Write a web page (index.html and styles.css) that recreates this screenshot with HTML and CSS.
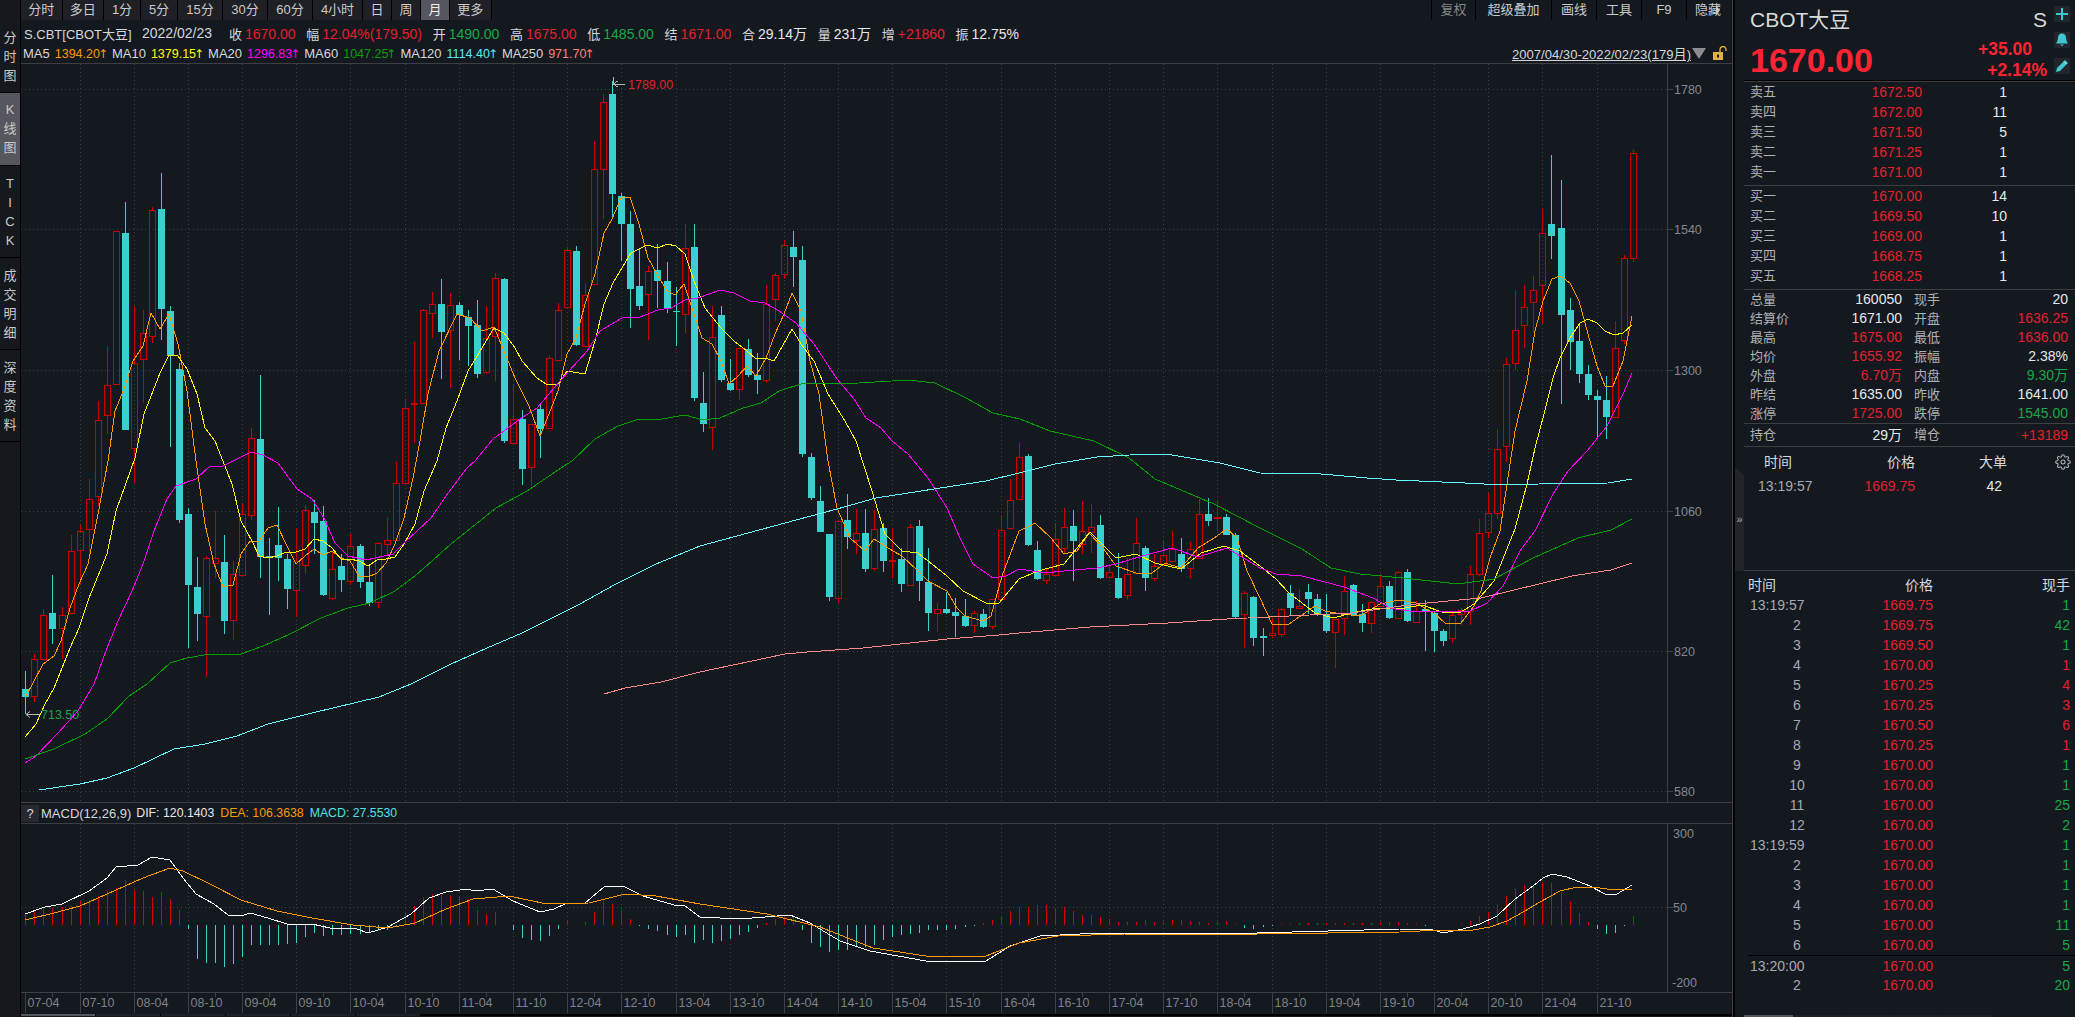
FILE: index.html
```html
<!DOCTYPE html>
<html lang="zh">
<head>
<meta charset="utf-8">
<title>CBOT大豆</title>
<link rel="stylesheet" href="styles.css">
</head>
<body>
<div class="app">
  <nav class="vtabs">
    <div class="vtab vt1">分<br>时<br>图</div>
    <div class="vtab vt2 on">K<br>线<br>图</div>
    <div class="vtab vt3">T<br>I<br>C<br>K</div>
    <div class="vtab vt3">成<br>交<br>明<br>细</div>
    <div class="vtab vt3">深<br>度<br>资<br>料</div>
  </nav>
  <main class="main">
    <div class="toolbar">
      <div class="periods">
        <span class="p w41">分时</span><span class="p w41">多日</span><span class="p w37">1分</span><span class="p w37">5分</span><span class="p w45">15分</span><span class="p w45">30分</span><span class="p w45">60分</span><span class="p w50">4小时</span><span class="p w29">日</span><span class="p w29">周</span><span class="p w28 on">月</span><span class="p w41">更多</span>
      </div>
      <div class="tools">
        <span class="p w44 dim">复权</span><span class="p w76">超级叠加</span><span class="p w45">画线</span><span class="p w45">工具</span><span class="p w45">F9</span><span class="p w46 hide">隐藏<i class="tri"></i></span>
      </div>
    </div>
    <div class="info">
      <span class="name">S.CBT[CBOT大豆]</span><span class="date">2022/02/23</span>
      <span class="kv">收<b class="r">1670.00</b></span>
      <span class="kv">幅<b class="r">12.04%(179.50)</b></span>
      <span class="kv">开<b class="g">1490.00</b></span>
      <span class="kv">高<b class="r">1675.00</b></span>
      <span class="kv">低<b class="g">1485.00</b></span>
      <span class="kv">结<b class="r">1671.00</b></span>
      <span class="kv">合<b class="w">29.14万</b></span>
      <span class="kv">量<b class="w">231万</b></span>
      <span class="kv">增<b class="r">+21860</b></span>
      <span class="kv">振<b class="w">12.75%</b></span>
    </div>
    <div class="mas">
      <div class="malist">
        <span class="ma">MA5<b class="c5">1394.20<i>↑</i></b></span>
        <span class="ma">MA10<b class="c10">1379.15<i>↑</i></b></span>
        <span class="ma">MA20<b class="c20">1296.83<i>↑</i></b></span>
        <span class="ma">MA60<b class="c60">1047.25<i>↑</i></b></span>
        <span class="ma">MA120<b class="c120">1114.40<i>↑</i></b></span>
        <span class="ma">MA250<b class="c250">971.70<i>↑</i></b></span>
      </div>
      <div class="range">
        <span class="rtext">2007/04/30-2022/02/23(179月)</span>
        <i class="rtri"></i>
        <svg class="lock" viewBox="0 0 16 14" width="16" height="14"><path d="M8 7V3.5a3 3 0 0 1 6 0V5" fill="none" stroke="#e2b33c" stroke-width="1.3"/><rect x="1" y="6" width="10" height="8" fill="#e2b33c"/><rect x="5" y="8.5" width="2" height="3" fill="#14181f"/></svg>
      </div>
    </div>
    <svg id="kline" class="kline" viewBox="21 63 1711 738" width="1711" height="738"></svg>
    <div class="macdhead">
      <span class="q">?</span><span class="mname">MACD(12,26,9)</span><span class="mv w">DIF: 120.1403</span><span class="mv c5">DEA: 106.3638</span><span class="mv cm">MACD: 27.5530</span>
    </div>
    <svg id="macd" class="macd" viewBox="21 823 1711 190" width="1711" height="190"></svg>
    <div class="btabs"><span class="bt on"></span><span class="bt"></span><span class="bt"></span><span class="bt"></span><span class="bt"></span><span class="bt"></span></div>
  </main>
  <aside class="side">
    <div class="inner">
      <header class="head">
        <div class="headmain">
          <div class="title"><span>CBOT大豆</span><span class="sym">S</span></div>
          <div class="priceline">
            <span class="bigprice">1670.00</span>
            <div class="chg"><span class="chg1">+35.00</span><span>+2.14%</span></div>
          </div>
        </div>
        <div class="tcol">
          <span class="tbtn"><svg viewBox="0 0 14 14" width="14" height="14"><path d="M7 1v12M1 7h12" stroke="#3fc6cf" stroke-width="2"/></svg></span>
          <span class="tbtn"><svg viewBox="0 0 14 14" width="14" height="14"><path d="M7 0.5c-2.6 0-4 2-4 4.5 0 3-1.6 4.6-2 5.5h12c-.4-.9-2-2.5-2-5.5 0-2.5-1.4-4.500-4-4.500zM5.300 11.500a1.800 1.800 0 0 0 3.400 0z" fill="#3fc6cf"/></svg></span>
          <span class="tbtn"><svg viewBox="0 0 14 14" width="14" height="14"><path d="M10 1l3 3-8 8-4 1 1-4z" fill="#3fc6cf"/><path d="M9 2.500l2.500 2.500" stroke="#b8f0f0" stroke-width="1"/></svg></span>
        </div>
      </header>
      <section class="book">
        <div class="brow"><span class="lb">卖五</span><span class="r">1672.50</span><span class="w">1</span></div>
        <div class="brow"><span class="lb">卖四</span><span class="r">1672.00</span><span class="w">11</span></div>
        <div class="brow"><span class="lb">卖三</span><span class="r">1671.50</span><span class="w">5</span></div>
        <div class="brow"><span class="lb">卖二</span><span class="r">1671.25</span><span class="w">1</span></div>
        <div class="brow"><span class="lb">卖一</span><span class="r">1671.00</span><span class="w">1</span></div>
      </section>
      <section class="book buy">
        <div class="brow"><span class="lb">买一</span><span class="r">1670.00</span><span class="w">14</span></div>
        <div class="brow"><span class="lb">买二</span><span class="r">1669.50</span><span class="w">10</span></div>
        <div class="brow"><span class="lb">买三</span><span class="r">1669.00</span><span class="w">1</span></div>
        <div class="brow"><span class="lb">买四</span><span class="r">1668.75</span><span class="w">1</span></div>
        <div class="brow"><span class="lb">买五</span><span class="r">1668.25</span><span class="w">1</span></div>
      </section>
      <section class="stats">
        <span class="lb">总量</span><span class="w">160050</span><span class="lb l2">现手</span><span class="w">20</span>
        <span class="lb">结算价</span><span class="w">1671.00</span><span class="lb l2">开盘</span><span class="r">1636.25</span>
        <span class="lb">最高</span><span class="r">1675.00</span><span class="lb l2">最低</span><span class="r">1636.00</span>
        <span class="lb">均价</span><span class="r">1655.92</span><span class="lb l2">振幅</span><span class="w">2.38%</span>
        <span class="lb">外盘</span><span class="r">6.70万</span><span class="lb l2">内盘</span><span class="g">9.30万</span>
        <span class="lb">昨结</span><span class="w">1635.00</span><span class="lb l2">昨收</span><span class="w">1641.00</span>
        <span class="lb">涨停</span><span class="r">1725.00</span><span class="lb l2">跌停</span><span class="g">1545.00</span>
      </section>
      <section class="stats hold">
        <span class="lb">持仓</span><span class="w">29万</span><span class="lb l2">增仓</span><span class="r">+13189</span>
      </section>
      <section class="big">
        <div class="bigh"><span class="bh1">时间</span><span>价格</span><span>大单</span>
          <svg class="gear" viewBox="0 0 24 24" width="16" height="16"><circle cx="12" cy="12" r="3"/><path d="M19.4 15a1.65 1.65 0 0 0 .33 1.82l.06.06a2 2 0 0 1 0 2.83 2 2 0 0 1-2.83 0l-.06-.06a1.65 1.65 0 0 0-1.82-.33 1.65 1.65 0 0 0-1 1.51V21a2 2 0 0 1-2 2 2 2 0 0 1-2-2v-.09A1.65 1.65 0 0 0 9 19.4a1.65 1.65 0 0 0-1.82.33l-.06.06a2 2 0 0 1-2.83 0 2 2 0 0 1 0-2.83l.06-.06a1.65 1.65 0 0 0 .33-1.82 1.65 1.65 0 0 0-1.51-1H3a2 2 0 0 1-2-2 2 2 0 0 1 2-2h.09A1.65 1.65 0 0 0 4.6 9a1.65 1.65 0 0 0-.33-1.82l-.06-.06a2 2 0 0 1 0-2.83 2 2 0 0 1 2.83 0l.06.06a1.65 1.65 0 0 0 1.82.33H9a1.65 1.65 0 0 0 1-1.51V3a2 2 0 0 1 2-2 2 2 0 0 1 2 2v.09a1.65 1.65 0 0 0 1 1.51 1.65 1.65 0 0 0 1.82-.33l.06-.06a2 2 0 0 1 2.83 0 2 2 0 0 1 0 2.83l-.06.06a1.65 1.65 0 0 0-.33 1.82V9a1.65 1.65 0 0 0 1.51 1H21a2 2 0 0 1 2 2 2 2 0 0 1-2 2h-.09a1.65 1.65 0 0 0-1.51 1z"/></svg>
        </div>
        <div class="bigr"><span class="tm br1">13:19:57</span><span class="r">1669.75</span><span class="w br3">42</span></div>
      </section>
      <section class="trades">
        <div class="th"><span class="thl">时间</span><span>价格</span><span>现手</span></div>
        <div class="tr"><span class="tm">13:19:57</span><span class="r">1669.75</span><span class="g">1</span></div>
        <div class="tr"><span class="tm sq">2</span><span class="r">1669.75</span><span class="g">42</span></div>
        <div class="tr"><span class="tm sq">3</span><span class="r">1669.50</span><span class="g">1</span></div>
        <div class="tr"><span class="tm sq">4</span><span class="r">1670.00</span><span class="r">1</span></div>
        <div class="tr"><span class="tm sq">5</span><span class="r">1670.25</span><span class="r">4</span></div>
        <div class="tr"><span class="tm sq">6</span><span class="r">1670.25</span><span class="r">3</span></div>
        <div class="tr"><span class="tm sq">7</span><span class="r">1670.50</span><span class="r">6</span></div>
        <div class="tr"><span class="tm sq">8</span><span class="r">1670.25</span><span class="r">1</span></div>
        <div class="tr"><span class="tm sq">9</span><span class="r">1670.00</span><span class="g">1</span></div>
        <div class="tr"><span class="tm sq">10</span><span class="r">1670.00</span><span class="g">1</span></div>
        <div class="tr"><span class="tm sq">11</span><span class="r">1670.00</span><span class="g">25</span></div>
        <div class="tr"><span class="tm sq">12</span><span class="r">1670.00</span><span class="g">2</span></div>
        <div class="tr"><span class="tm">13:19:59</span><span class="r">1670.00</span><span class="g">1</span></div>
        <div class="tr"><span class="tm sq">2</span><span class="r">1670.00</span><span class="g">1</span></div>
        <div class="tr"><span class="tm sq">3</span><span class="r">1670.00</span><span class="g">1</span></div>
        <div class="tr"><span class="tm sq">4</span><span class="r">1670.00</span><span class="g">1</span></div>
        <div class="tr"><span class="tm sq">5</span><span class="r">1670.00</span><span class="g">11</span></div>
        <div class="tr"><span class="tm sq">6</span><span class="r">1670.00</span><span class="g">5</span></div>
        <div class="tr latest"><span class="tm">13:20:00</span><span class="r">1670.00</span><span class="g">5</span></div>
        <div class="tr last"><span class="tm sq">2</span><span class="r">1670.00</span><span class="g">20</span></div>
      </section>
      <div class="sidetabs"><span class="bt on"></span><span class="bt"></span><span class="bt"></span><span class="bt"></span><span class="bt"></span></div>
    </div>
    <div class="handle">»</div>
  </aside>
</div>
<script src="chart.js"></script>
</body>
</html>
```
FILE: styles.css
```css
* { box-sizing: border-box; }
html, body { margin: 0; padding: 0; background: #14181f; }
body { font-family: "Liberation Sans", "Noto Sans CJK SC", sans-serif; font-size: 14px; color: #d5d7da; overflow: hidden; }
b, i { font-weight: normal; font-style: normal; }
.r { color: #e5202e; }
.g { color: #18a848; }
.w { color: #e6e8ea; }
.c5 { color: #ff9900; }
.c10 { color: #ffff00; }
.c20 { color: #ff00ff; }
.c60 { color: #00a000; }
.c120 { color: #55eeee; }
.c250 { color: #ff8080; }
.cm { color: #4fe3e6; }

.app { display: flex; width: 2075px; height: 1017px; }

.vtabs { width: 21px; flex: none; padding-top: 22px; border-right: 1px solid #000; background: #15181d; }
.vtab { text-align: center; font-size: 13px; line-height: 19px; color: #c8cacc; border-bottom: 1px solid #000; }
.vt1 { height: 71px; padding-top: 6px; }
.vt2 { height: 73px; padding-top: 7px; background: #55565e; }
.vt3 { height: 92px; padding-top: 8px; }

.main { width: 1711px; flex: none; display: flex; flex-direction: column; }
.toolbar { height: 20px; display: flex; justify-content: space-between; }
.periods, .tools { display: flex; }
.p { height: 20px; line-height: 20px; text-align: center; font-size: 13px; background: #1e2025; border-right: 1px solid #000; color: #c9cbcd; flex: none; }
.p.on { background: #55565e; color: #eee; }
.p.dim { color: #85878a; }
.tools .p { background: #14181f; border-left: 1px solid #000; border-right: 0; }
.hide { position: relative; text-align: left; padding-left: 8px; overflow: hidden; white-space: nowrap; }
.tri { display: inline-block; border-left: 4px solid #c9cbcd; border-top: 4px solid transparent; border-bottom: 4px solid transparent; margin-left: -1px; position: relative; left: -4px; }
.w28 { width: 29px; } .w29 { width: 29px; } .w37 { width: 37px; } .w41 { width: 41.500px; } .w44 { width: 44px; } .w45 { width: 45px; } .w46 { width: 46px; } .w50 { width: 50px; } .w76 { width: 76px; }

.info { height: 24px; display: flex; align-items: center; padding-left: 3px; white-space: nowrap; color: #d5d7da; font-size: 13px; padding-top: 2px; }
.info b { font-size: 14px; margin-left: 3px; }
.name { width: 118px; font-size: 13px; }
.date { font-size: 14px; margin-right: 8px; width: 79px; }
.kv { margin-right: 10.700px; }
.mas { height: 19px; display: flex; justify-content: space-between; align-items: center; padding-left: 2px; border-bottom: 1px solid #3c3e42; white-space: nowrap; box-sizing: content-box; font-size: 14px; }
.malist { display: flex; align-items: center; }
.ma { margin-right: 6px; font-size: 13px; display: flex; align-items: center; }
.ma b { font-size: 12.500px; margin-left: 5px; display: flex; align-items: center; }
.ma i { display: flex; justify-content: center; width: 6px; font-family: "DejaVu Sans", sans-serif; font-size: 12px; line-height: 14px; }
.range { display: flex; align-items: center; padding-right: 4px; }
.rtext { text-decoration: underline; font-size: 13.100px; color: #d5d7da; }
.rtri { width: 0; height: 0; border-left: 7px solid transparent; border-right: 7px solid transparent; border-top: 11px solid #8b8d90; margin-left: 1px; margin-right: 6px; }
.lock { display: block; margin-top: -2px; }

.kline, .macd { display: block; flex: none; }
.kline { height: 738px; }
.macd { height: 190px; }
.macdhead { height: 22px; flex: none; display: flex; align-items: center; border-top: 1px solid #3c3e42; border-bottom: 1px solid #3c3e42; white-space: nowrap; font-size: 13px; }
.q { width: 18px; height: 17px; line-height: 17px; text-align: center; background: #27292e; color: #d5d7da; margin-right: 2px; }
.mname { margin-right: 5px; }
.mv { margin-right: 6px; font-size: 12.300px; }
.btabs { height: 2px; display: flex; gap: 1px; background: #000; flex: none; }
.bt { width: 64px; background: #1e2025; height: 2px; }
.bt.on { background: #55565e; width: 74px; }

.side { width: 343px; flex: none; border-left: 1px solid #3c3e42; position: relative; }
.inner { height: 1017px; border-left: 2px solid #000; padding-left: 9px; display: flex; flex-direction: column; }
.head { height: 82px; flex: none; display: flex; border-bottom: 1px solid #3c3e42; position: relative; box-shadow: inset 0 -1px 0 #000; padding-left: 6px; }
.headmain { flex: 1; }
.title { height: 38px; padding-top: 6px; display: flex; justify-content: space-between; font-size: 21px; line-height: 27px; color: #d8dadc; padding-right: 3px; }
.sym { font-size: 21px; }
.priceline { display: flex; justify-content: space-between; padding-right: 3px; margin-top: -2px; }
.bigprice { font-size: 34px; font-weight: bold; color: #ff2433; line-height: 40px; margin-top: 4px; }
.chg { display: flex; flex-direction: column; align-items: flex-end; font-weight: bold; color: #ff2433; font-size: 17.500px; line-height: 21px; padding-top: 3px; }
.chg1 { margin-right: 15px; }
.tcol { width: 25px; flex: none; padding-top: 6px; padding-left: 4px; }
.tbtn { display: flex; width: 16px; height: 16px; align-items: center; justify-content: center; background: #23272d; margin-bottom: 10px; }

.book { border-bottom: 1px solid #3c3e42; height: 104px; flex: none; }
.brow { display: grid; grid-template-columns: 60px 112px 85px; height: 20px; line-height: 20px; padding-left: 6px; }
.brow span:nth-child(n+2) { text-align: right; }
.lb { font-size: 13px; color: #b0b2b4; }
.stats { display: grid; grid-template-columns: 60px 92px 72px 94px; grid-auto-rows: 19px; line-height: 19px; padding-left: 6px; flex: none; }
.stats span:nth-child(even) { text-align: right; }
.l2 { padding-left: 12px; }
.hold { height: 24px; border-top: 1px solid #3c3e42; border-bottom: 1px solid #3c3e42; grid-auto-rows: 23px; line-height: 22px; }
.big { height: 124px; flex: none; border-bottom: 1px solid #3c3e42; position: relative; }
.bigh { display: grid; grid-template-columns: 100px 71px 92px; height: 29px; padding-top: 6px; line-height: 18px; font-size: 14px; color: #d5d7da; text-align: right; }
.bh1 { text-align: left; padding-left: 20px; }
.bigr { display: grid; grid-template-columns: 100px 71px 92px; line-height: 20px; text-align: right; }
.gear { position: absolute; right: 4px; top: 7px; fill: none; stroke: #b0b2b4; stroke-width: 1.600; }
.tm { color: #a4aab2; text-align: left; }
.br1 { padding-left: 14px; }
.br3 { padding-right: 5px; }
.trades { flex: none; padding-left: 6px; }
.th { display: grid; grid-template-columns: 120px 63px 137px; height: 24px; padding-top: 5px; line-height: 19px; text-align: right; color: #d5d7da; }
.thl { text-align: left; margin-left: -2px; }
.tr { display: grid; grid-template-columns: 120px 63px 137px; height: 20px; line-height: 20px; text-align: right; }
.tr .tm { text-align: left; }
.tr .sq { width: 16px; margin-left: 39px; white-space: nowrap; display: flex; justify-content: center; }
.latest { height: 21px; border-top: 1px solid #000; margin-left: -2px; padding-left: 2px; }
.last { height: 19px; line-height: 19px; }
.sidetabs { margin-top: auto; height: 2px; display: flex; gap: 1px; flex: none; }
.sidetabs .bt { width: 49px; }
.handle { position: absolute; left: 2px; top: 467px; width: 9px; height: 104px; background: #22242a; clip-path: polygon(0 0, 100% 8px, 100% 100%, 0 100%); color: #b0b2b4; font-size: 11px; line-height: 104px; text-align: center; }

.gridl { stroke: #3e4045; stroke-width: 1; stroke-dasharray: 1 3; fill: none; }
.axisl { stroke: #3e4045; stroke-width: 1; fill: none; shape-rendering: crispEdges; }
.axt { font-size: 12.500px; fill: #85888d; }
.xt { font-size: 12.500px; fill: #7d8289; }
.ml { fill: none; stroke-width: 1; shape-rendering: crispEdges; stroke-linejoin: round; }
.mark { font-size: 12.500px; }
.markr { fill: #e5202e; }
.markg { fill: #18a848; }
.arrow { fill: none; stroke: #b8b8b8; stroke-width: 1; }
```
FILE: chart.js
```js
(function () {
  var NS = 'http://www.w3.org/2000/svg';
  function el(parent, name, attrs, text) {
    var e = document.createElementNS(NS, name);
    for (var k in attrs) e.setAttribute(k, attrs[k]);
    if (text) e.textContent = text;
    parent.appendChild(e);
    return e;
  }
  // up(1)/down(0), body top, body bottom, wick top, wick bottom (px)
  var C = [
[0,688,696,670,713],[1,658,695,653,701],[1,614,658,608,658],[0,612,628,574,643],[1,614,627,606,658],[1,550,612,534,612],[1,530,549,524,583],[1,498,528,478,557],[1,419,495,400,505],[1,384,414,345,433],
[1,230,383,230,383],[0,232,429,201,429],[1,362,447,305,482],[1,332,358,309,402],[1,209,335,206,342],[0,208,308,172,339],[0,310,355,305,446],[0,368,519,362,522],[0,513,584,507,647],[0,586,613,556,640],
[1,557,615,555,676],[1,557,562,510,577],[0,561,620,534,633],[1,573,619,560,639],[1,513,574,502,574],[1,437,514,427,519],[0,438,556,374,577],[0,555,556,537,614],[0,544,557,506,580],[0,558,588,553,608],
[1,560,589,527,616],[1,509,564,504,573],[0,511,522,499,553],[0,520,594,505,595],[1,568,597,551,599],[0,565,579,553,591],[1,545,580,533,584],[0,545,581,543,587],[0,581,602,563,605],[1,542,601,541,607],
[1,539,543,517,555],[1,482,539,461,539],[1,407,482,398,482],[1,402,403,341,442],[1,309,402,308,402],[1,303,312,291,337],[0,303,331,278,378],[1,304,329,292,387],[0,304,314,301,359],[0,316,325,309,365],
[0,324,373,299,377],[1,337,371,305,373],[1,277,335,272,380],[0,278,440,277,442],[1,418,442,383,442],[0,418,468,409,484],[1,423,466,423,485],[0,408,428,402,457],[1,357,427,355,427],[1,309,359,302,359],
[1,249,306,246,308],[0,250,344,245,345],[1,294,345,282,345],[1,168,283,140,283],[1,101,168,93,218],[0,93,193,80,218],[0,195,223,192,260],[0,223,288,210,327],[0,285,305,248,309],[1,270,293,265,339],
[0,269,280,243,307],[0,280,307,261,312],[0,310,311,286,345],[1,247,313,223,332],[0,246,397,223,400],[0,402,423,371,431],[1,336,426,305,449],[0,314,379,305,381],[0,382,389,358,390],[1,347,388,347,399],
[0,348,374,338,376],[0,374,379,352,393],[1,303,379,284,382],[1,274,298,272,320],[1,244,273,239,278],[0,246,256,230,286],[0,259,453,245,456],[0,456,497,452,499],[0,500,531,485,531],[0,533,596,533,600],
[1,520,597,520,602],[0,519,536,493,548],[1,532,539,508,553],[0,532,568,508,571],[1,528,567,509,570],[0,527,560,522,571],[1,559,560,527,577],[0,558,583,547,591],[1,526,584,523,585],[0,525,580,519,600],
[0,581,612,547,630],[1,608,612,602,631],[0,608,612,591,613],[0,611,615,597,636],[0,615,625,598,626],[1,612,624,610,632],[0,613,626,608,627],[1,598,625,598,628],[1,529,598,514,598],[1,499,527,478,527],
[1,456,498,442,498],[0,455,544,453,545],[0,549,578,540,579],[1,573,579,567,583],[1,538,574,522,574],[1,526,547,507,553],[0,525,540,509,580],[1,530,543,500,553],[1,526,531,503,552],[0,524,577,514,578],
[1,571,576,565,577],[0,577,597,552,598],[1,573,594,557,598],[1,542,572,517,572],[0,547,577,545,590],[1,565,577,553,580],[1,554,563,540,563],[1,548,560,530,560],[0,553,568,537,571],[1,548,567,541,577],
[1,513,557,498,557],[0,513,520,497,525],[1,516,517,500,530],[0,516,534,513,534],[0,534,616,532,617],[1,592,613,590,647],[0,596,637,595,645],[0,635,637,627,655],[1,632,634,617,637],[1,608,633,607,636],
[0,592,607,584,615],[1,605,607,588,608],[0,591,598,583,613],[0,598,613,593,615],[0,613,630,593,632],[1,618,631,618,667],[1,590,617,575,634],[0,584,614,583,615],[0,613,622,603,631],[1,601,622,600,632],
[1,585,605,573,606],[0,585,617,580,618],[1,571,617,570,618],[0,571,620,568,621],[1,610,621,600,622],[0,608,611,599,650],[0,612,630,610,651],[0,630,640,628,645],[1,614,637,612,642],[1,609,613,607,624],
[1,573,610,565,624],[1,532,573,518,575],[1,512,531,492,537],[1,448,512,428,518],[1,363,445,357,461],[1,329,362,289,369],[1,306,324,284,347],[1,289,301,275,331],[1,232,284,208,323],[0,223,235,154,258],
[0,227,314,179,403],[0,309,341,297,369],[0,340,373,323,382],[0,373,394,364,399],[0,395,399,389,437],[0,399,416,375,438],[1,347,416,320,417],[1,257,339,254,343],[1,152,257,149,261]
  ];
  var LINES = {
    '#ff9900': [25,697,43,663,54,655,61,640,70,607,79,583,88,563,98,513,108,460,115,410,124,388,133,360,143,345,151,312,160,328,169,313,178,343,187,390,196,460,205,523,214,563,223,586,233,584,241,553,250,540,259,540,268,527,277,524,286,543,296,563,305,555,314,548,323,554,332,550,341,557,350,560,359,575,368,576,377,572,386,562,395,543,404,517,413,477,420,440,428,393,439,350,457,313,470,317,482,330,494,326,504,350,515,377,529,405,540,435,549,413,558,390,567,353,576,337,585,303,595,273,604,232,612,218,621,197,630,196,639,223,648,257,657,273,667,290,675,294,684,283,693,310,702,337,712,343,721,360,729,383,738,375,747,365,756,375,766,357,775,333,784,313,792,292,801,310,810,360,819,393,828,460,837,507,850,537,865,550,874,538,893,550,902,555,918,570,928,580,947,590,957,607,965,615,983,620,991,615,1002,575,1019,530,1035,522,1051,537,1064,553,1077,550,1089,532,1103,547,1116,565,1136,572,1152,572,1165,562,1181,567,1198,547,1214,537,1227,528,1237,537,1247,570,1260,597,1272,623,1289,623,1315,605,1325,610,1341,613,1360,615,1380,603,1399,599,1416,602,1435,613,1445,622,1461,622,1474,605,1481,590,1490,557,1500,530,1507,483,1515,430,1527,380,1535,330,1543,300,1552,278,1560,275,1570,282,1579,300,1588,333,1597,365,1605,385,1613,385,1623,360,1632,315],
    '#ffff00': [25,736,36,723,45,703,54,687,70,647,79,627,89,597,107,553,116,510,135,457,144,413,153,390,160,372,169,354,178,355,187,368,197,393,205,427,215,440,232,483,241,520,252,540,259,555,268,557,277,555,286,551,296,551,305,548,314,538,323,540,332,547,341,558,350,558,359,560,368,565,377,559,386,558,395,556,404,543,415,523,424,490,437,460,446,427,457,400,468,370,482,347,494,327,504,332,515,347,522,360,537,377,546,383,558,383,567,370,585,373,595,340,604,303,613,282,622,267,631,252,647,244,658,247,667,243,676,245,685,253,694,280,705,307,721,327,734,340,747,350,756,358,765,357,774,360,792,328,801,343,814,360,828,393,845,420,856,440,872,490,885,533,902,550,918,552,947,575,963,590,986,602,999,602,1019,578,1038,570,1064,563,1090,531,1116,557,1136,553,1155,562,1181,568,1201,552,1224,545,1240,550,1260,565,1276,578,1289,592,1315,612,1334,617,1351,612,1377,607,1399,608,1422,604,1442,611,1461,611,1474,603,1494,580,1515,528,1527,483,1535,447,1544,413,1553,377,1560,357,1570,337,1580,322,1588,318,1597,322,1605,330,1614,334,1623,332,1632,324],
    '#ff00ff': [25,762,36,755,58,732,78,710,94,683,107,647,118,620,132,590,143,563,154,530,167,498,176,485,196,478,210,465,223,465,237,458,251,451,263,454,278,462,286,473,297,488,312,498,324,517,335,542,348,555,366,559,393,553,404,542,431,517,446,495,467,467,475,460,493,438,520,418,537,407,560,380,587,350,600,330,622,317,640,316,658,309,671,307,685,299,698,297,720,289,734,292,750,300,765,302,779,310,796,322,814,343,837,378,854,398,866,417,881,427,892,440,908,453,928,477,947,507,960,537,973,563,993,577,1006,575,1019,568,1045,572,1064,570,1097,567,1116,563,1142,555,1172,547,1198,556,1227,547,1260,567,1276,573,1302,575,1344,586,1373,597,1390,607,1409,610,1468,611,1487,602,1503,585,1520,550,1535,530,1553,493,1568,470,1587,450,1607,425,1623,393,1632,372],
    '#00a000': [25,758,54,748,85,733,107,718,129,695,147,683,170,662,187,657,210,653,241,653,263,645,290,633,321,617,348,607,370,602,395,590,415,575,451,543,496,507,527,490,567,463,572,460,595,438,618,425,636,419,662,418,685,414,703,419,720,417,743,407,761,402,779,390,801,383,859,382,908,379,935,382,966,397,993,412,1020,418,1050,430,1094,440,1129,457,1155,478,1214,503,1260,527,1302,548,1331,567,1360,573,1403,577,1458,583,1494,578,1533,557,1578,537,1611,529,1632,518],
    '#66ffff': [39,789,80,783,107,777,134,767,174,748,205,743,237,735,268,723,312,712,379,696,411,683,451,663,487,647,522,632,580,603,616,583,656,563,700,545,785,522,837,508,876,497,934,488,986,480,1019,472,1055,463,1097,456,1146,453,1172,454,1220,462,1260,472,1321,473,1367,477,1396,479,1465,482,1503,484,1539,483,1608,482,1632,478],
    '#ff8888': [604,693,625,687,661,681,700,671,785,653,807,651,863,647,947,638,999,634,1019,632,1090,626,1168,622,1227,618,1351,612,1416,603,1481,597,1539,583,1572,575,1611,569,1632,562]
  };
  var DIF = [25,913,45,906,62,903,89,890,107,877,116,866,138,864,152,856,170,859,183,877,196,893,214,903,228,914,241,915,250,912,268,917,290,924,312,923,330,927,357,928,368,932,388,926,411,913,429,897,446,891,467,888,475,890,493,888,513,900,540,911,554,908,567,902,585,902,604,886,623,885,643,895,674,904,685,905,700,916,740,918,790,914,810,922,840,940,870,950,926,960,986,960,1010,945,1040,935,1100,932,1257,932,1400,928,1430,928,1440,931,1448,931,1463,928,1480,923,1497,915,1515,898,1533,885,1543,877,1552,873,1567,876,1590,885,1605,893,1617,893,1632,884];
  var DEA = [25,919,54,912,80,905,107,893,143,877,170,867,183,870,210,883,241,899,277,910,312,917,353,924,388,927,415,922,446,908,473,898,509,895,547,903,589,902,625,893,656,895,700,903,767,913,820,926,873,947,926,955,986,955,1019,942,1058,935,1125,933,1257,933,1400,931,1420,930,1433,929,1473,929,1490,926,1507,920,1523,911,1540,901,1560,890,1577,886,1600,887,1613,889,1632,888];
  // histogram height in px, positive = up from the zero line
  var H = [];
  var H0 = [395,390,383,380,378,373,360,355,343,330,320,297,327,330,348,333,353,385,442,533,545,545,557,548,528,490,492,490,490,488,485,467,456,463,460,460,458,458,456,447,445,433,393,375,348,337,340,340,347,352,387,397,393,431,447,470,477,480,465,444,420,430,423,393,360,368,385,414,435,444,450,462,466,462,485];
  H0.forEach(function (v) { H.push((431 - v) / 3); });
  H = H.concat([-15,-18,-16,-14,-10,-7,-3,2,6,8,10,-5,-18,-22,-27,-25,-25,-22,-22,-20,-15,-12,-10,-9,-8,-5,-5,-5,-4,-2,-1,2,5,8,14,18,18,20,20,16,18,14,10,10,8,6,3,3,3,5,3,3,5,5,4,3,2,3,4,1,-3,-4,-2,-1,1,1,2,2,2,2,2,2,2,2,2,3,3,3,2,1,-1,0,0,0]);
  var H1 = [393,372,345,323,312,310,303,305,332,363,396,423,443,458,456,435,405];
  H1.forEach(function (v, k) { H[162 + k] = (431 - v) / 3; });
  H[161] = 9; H[160] = 4; H[159] = 1;

  var X0 = 25.4, DX = 9.03;
  function cx(i) { return Math.round(X0 + DX * i); }
  function gx(k) { return Math.round(X0 + 54.18 * k) + 0.5; }
  var RED = '#cc0000', CY = '#3bcfd0';

  var kl = document.getElementById('kline');
  var HG = [[1780, 88], [1540, 228], [1300, 369], [1060, 510], [820, 650], [580, 790]];
  for (var k = 1; k < 30; k++) el(kl, 'line', { x1: gx(k), x2: gx(k), y1: 63, y2: 801, 'class': 'gridl' });
  HG.forEach(function (h) {
    el(kl, 'line', { x1: 21, x2: 1668, y1: h[1] + 0.5, y2: h[1] + 0.5, 'class': 'gridl' });
    el(kl, 'line', { x1: 1668, x2: 1673, y1: h[1] + 0.5, y2: h[1] + 0.5, 'class': 'axisl' });
    el(kl, 'text', { x: 1674, y: h[1] + 5, 'class': 'axt' }, String(h[0]));
  });
  el(kl, 'line', { x1: 1667.5, x2: 1667.5, y1: 63, y2: 801, 'class': 'axisl' });

  function rect(p, x, y, w, h, col) { el(p, 'rect', { x: x, y: y, width: w, height: Math.max(h, 1), fill: col, 'shape-rendering': 'crispEdges' }); }
  C.forEach(function (c, i) {
    var x = cx(i);
    if (c[0]) {
      rect(kl, x, c[3], 1, c[1] - c[3], RED);
      rect(kl, x, c[2], 1, c[4] - c[2], RED);
      el(kl, 'rect', { x: x - 2.5, y: c[1] + 0.5, width: 6, height: Math.max(c[2] - c[1], 1), fill: 'none', stroke: RED, 'shape-rendering': 'crispEdges' });
    } else {
      rect(kl, x, c[3], 1, c[4] - c[3], CY);
      rect(kl, x - 3, c[1], 7, c[2] - c[1], CY);
    }
  });
  function poly(p, pts, col) {
    var s = [];
    for (var i = 0; i < pts.length; i += 2) s.push(pts[i] + ',' + pts[i + 1]);
    el(p, 'polyline', { points: s.join(' '), stroke: col, 'class': 'ml' });
  }
  Object.keys(LINES).forEach(function (col) { poly(kl, LINES[col], col); });
  el(kl, 'path', { d: 'M613 75.500V83M625 83H613.500l4-3M613.500 83l4 3', 'class': 'arrow', 'shape-rendering': 'crispEdges' });
  el(kl, 'text', { x: 628, y: 87.5, 'class': 'mark markr' }, '1789.00');
  el(kl, 'path', { d: 'M26 713.500H40M26 713.500l4-3M26 713.500l4 3', 'class': 'arrow' });
  el(kl, 'text', { x: 41, y: 718, 'class': 'mark markg' }, '713.50');

  var mc = document.getElementById('macd');
  for (var k2 = 1; k2 < 30; k2++) el(mc, 'line', { x1: gx(k2), x2: gx(k2), y1: 823, y2: 991, 'class': 'gridl' });
  el(mc, 'line', { x1: 21, x2: 1668, y1: 906.5, y2: 906.5, 'class': 'gridl' });
  [[300, 832], [50, 906], [-200, 981]].forEach(function (h) {
    el(mc, 'text', { x: h[0] === -200 ? 1672 : 1673, y: h[1] + 5, 'class': 'axt' }, String(h[0]));
  });
  el(mc, 'line', { x1: 1668, x2: 1673, y1: 906.5, y2: 906.5, 'class': 'axisl' });
  el(mc, 'line', { x1: 1667.5, x2: 1667.5, y1: 823, y2: 991, 'class': 'axisl' });
  var ZERO = 924;
  H.forEach(function (h, i) {
    if (h === undefined || Math.abs(h) < 0.4) return;
    var x = cx(i);
    if (h > 0) rect(mc, x, ZERO - h, 1, h, '#d40000');
    else rect(mc, x, ZERO, 1, -h, CY);
  });
  poly(mc, DIF, '#ffffff');
  poly(mc, DEA, '#ff9900');
  el(mc, 'line', { x1: 21, x2: 1732, y1: 991.5, y2: 991.5, 'class': 'axisl' });
  var yr = 7, mo = 4;
  for (var t = 0; t < 30; t++) {
    var tx = gx(t);
    el(mc, 'line', { x1: tx, x2: tx, y1: 991, y2: 1012, 'class': 'axisl' });
    if (t < 29) { var sx = tx + 27; el(mc, 'line', { x1: sx, x2: sx, y1: 991, y2: 996, 'class': 'axisl' }); }
    var lab = (yr < 10 ? '0' : '') + yr + '-' + (mo < 10 ? '0' : '') + mo;
    el(mc, 'text', { x: tx + 2, y: 1006, 'class': 'xt' }, lab);
    if (mo === 4) mo = 10; else { mo = 4; yr++; }
  }
})();
```
